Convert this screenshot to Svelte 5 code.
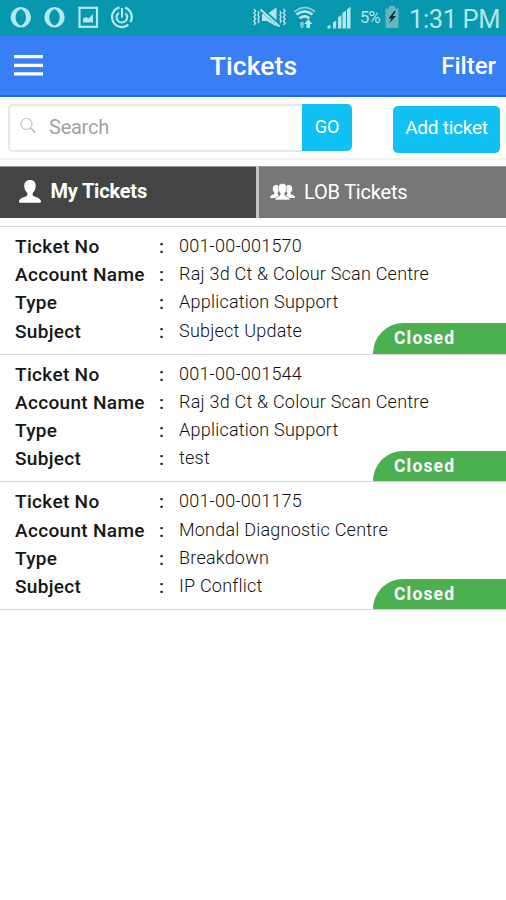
<script>
  const tickets = [
    { no: '001-00-001570', account: 'Raj 3d Ct & Colour Scan Centre', type: 'Application Support', subject: 'Subject Update' },
    { no: '001-00-001544', account: 'Raj 3d Ct & Colour Scan Centre', type: 'Application Support', subject: 'test' },
    { no: '001-00-001175', account: 'Mondal Diagnostic Centre', type: 'Breakdown', subject: 'IP Conflict' }
  ];
  const fields = [
    ['Ticket No', 'no'],
    ['Account Name', 'account'],
    ['Type', 'type'],
    ['Subject', 'subject']
  ];
</script>

<div class="screen">
  <div class="status">
    <svg width="136" height="36" viewBox="0 0 136 36" fill="none" stroke="#b5e8ee">
      {#each [20.8, 54.5] as x}
        <path transform="translate({x} 17.3)" fill="#b5e8ee" stroke="none" fill-rule="evenodd" d="M0-10.200A10.200 10.200 0 0 1 0 10.200A10.200 10.200 0 0 1 0-10.200zM0-8.400C-7-5-7 5 0 8.400C7 5 7-5 0-8.400z" />
      {/each}
      <rect x="79.5" y="7.8" width="17.5" height="19" stroke-width="2.2" />
      <path d="M83 22.500v-4l3-1.500 2.500 1.500 4.500-4.500v8.500z" fill="#b5e8ee" stroke="none" />
      <path d="M119.500 7.400A10 10 0 1 0 128.500 24.700M125 7.600A10 10 0 0 1 130.500 22" stroke-width="2.200" />
      <path d="M119 12.800A5.300 5.300 0 1 0 125.300 13.200" stroke-width="2.100" />
      <path d="M122 8v9.500" stroke-width="2" />
    </svg>
    <div class="right">
      <svg width="104" height="36" viewBox="250 0 104 36" fill="none" stroke="#b5e5e9">
        <path d="M254 9l1.500 2-1.500 2 1.500 2-1.500 2 1.500 2-1.500 2 1.500 2-1.500 2M258 11l1 2-1 2 1 2-1 2 1 2-1 2M280 11l1 2-1 2 1 2-1 2 1 2-1 2M283.500 9l1.500 2-1.500 2 1.500 2-1.500 2 1.500 2-1.500 2 1.500 2-1.500 2" stroke-width="1.4" />
        <path d="M262 14h5l9.500-6.500v19L267 21h-5z" fill="#b5e5e9" stroke="none" />
        <path d="M261.500 9.500L279 25" stroke="#0797ae" stroke-width="4" />
        <path d="M260.500 9.500L279.500 26.500" stroke-width="1.9" />
        <path d="M294.500 11.800q10.300-8.500 20.600 0" stroke-width="1.7" opacity=".75" />
        <path d="M296.500 14.600q8-6.500 16 0M299.500 18.300q5-4 10 0" stroke-width="2.6" />
        <path d="M300 23l2-1.500 2 1.500v2h-4zM299.500 25.500h5l-2.500 3z" fill="#b5e5e9" stroke="none" opacity=".7" />
        <path d="M306.500 28v-4h-2.200l4-5 4 5H310v4z" fill="#b5e5e9" stroke="none" />
        <path d="M327.500 28.500v-2.500l3-1v3.500zM333 28.500v-6l3.200-2v8zM338 28.500V17.500l3.400-2.500v13.500zM342.500 28.500V13l3.500-2.500v18zM347 28.500V9.500l3.500-3v22z" fill="#b5e5e9" stroke="none" />
      </svg>
      <span class="pct">5%</span>
      <svg width="14" height="36" viewBox="0 0 14 36">
        <path d="M4 6h6v2.500h3.500V28H.5V8.500H4z" fill="#67b5c0" />
        <path d="M9.500 11L3.500 18.500h3L4 23.500l7-7.500H7.700l3.300-5z" fill="#092d34" />
      </svg>
      <span class="time">1:31 PM</span>
    </div>
  </div>

  <header>
    <svg width="29" height="21" viewBox="0 0 29 21"><path d="M0 1.700h29M0 10.300h29M0 18.900h29" stroke="#fff" stroke-width="3.2" /></svg>
    <h1>Tickets</h1>
    <span class="filter">Filter</span>
  </header>

  <div class="tools">
    <div class="search">
      <svg width="18" height="18" viewBox="0 0 18 18" fill="none" stroke="#c4c4c4" stroke-width="1.2"><circle cx="6.5" cy="7" r="5.5" /><path d="M10.500 10.800l4.700 4.700" stroke-width="1.8" /></svg>
      <span>Search</span>
    </div>
    <div class="go"><span>GO</span></div>
    <div class="add"><span>Add ticket</span></div>
  </div>

  <nav>
    <div class="tab active">
      <svg width="22" height="23" viewBox="0 0 22 23"><path d="M11 0c4 0 6 2.600 5.700 6.500-.2 3-1.500 5-3 6.500v2.500c1 1.800 8.300 1.500 8.300 6.500q0 .8-1 .8H1q-1 0-1-.8c0-5 7.300-4.700 8.300-6.500V13c-1.500-1.500-2.800-3.500-3-6.500C5 2.600 7 0 11 0z" fill="#fff" /></svg>
      <span class="my">My Tickets</span>
    </div>
    <div class="tab lob">
      <svg width="25" height="18" viewBox="0 0 25 18" fill="#fff">
        <path d="M6 2c2.800 0 3.600 2 3.200 4.500-.2 1.500-.8 2.300-1.500 3v1.600L9 12.500 6 15H0c0-3.500 3.800-3 4.300-4.300V9.500C3 8 2.800 6.800 2.800 5.500 2.800 3.500 4 2 6 2z" />
        <path d="M19 2c-2.800 0-3.600 2-3.200 4.500.2 1.500.8 2.300 1.500 3v1.600L16 12.500l3 2.500h6c0-3.500-3.800-3-4.300-4.300V9.500c1.300-1.500 1.500-2.700 1.500-4C22.200 3.500 21 2 19 2z" />
        <path d="M12.500.5c3 0 4.600 2 4.300 5-.2 2-1 3.500-2 4.500V12c.8 1.500 5.200 1.500 5.200 5H5c0-3.500 4.400-3.500 5.200-5v-2c-1-1-1.800-2.500-2-4.500-.3-3 1.300-5 4.300-5z" stroke="#777" stroke-width=".6" />
      </svg>
      <span class="lt">LOB Tickets</span>
    </div>
  </nav>

  <main>
    {#each tickets as ticket}
      <article>
        {#each fields as [label, key]}
          <div class="row">
            <b>{label}</b><i>:</i><span class="value">{ticket[key]}</span>
          </div>
        {/each}
        <div class="badge">Closed</div>
      </article>
    {/each}
  </main>
</div>

<style>
  :global(body) { background: #fff; }
  .screen { width: 506px; height: 900px; overflow: hidden; background: #fff; font-family: Roboto, sans-serif; color: #222; }
  svg { display: block; flex: none; }
  span { white-space: nowrap; }
  .status { height: 36px; background: #0797ae; display: flex; justify-content: space-between; color: #b5e5e9; }
  .right { display: flex; width: 256px; line-height: 38px; }
  .pct { width: 25px; margin-left: 6px; font-size: 16.5px; line-height: 36px; letter-spacing: -.8px; }
  .time { margin-left: 10px; font-size: 25.5px; letter-spacing: -.4px; line-height: 39px; }
  header { box-sizing: border-box; height: 61px; padding: 0 10px 0 14px; background: #387ef5; border-bottom: 2px solid #1c6bea; display: grid; grid-template-columns: 86px 1fr 86px; align-items: center; color: #fff; }
  h1 { margin: 0 3px 0 0; font-size: 26.5px; line-height: 59px; font-weight: 500; text-align: center; letter-spacing: .05px; }
  .filter { font-size: 24px; font-weight: 500; text-align: right; }
  .tools { box-sizing: border-box; height: 63px; padding: 7px 6px 0 8px; border-bottom: 2px solid #f3f3f3; display: flex; color: #fff; font-size: 19px; }
  .search { box-sizing: border-box; width: 294px; height: 48px; border: 2px solid #e7e7e7; border-right: 0; border-radius: 5px 0 0 5px; display: flex; align-items: center; color: #a3a3a3; }
  .search svg { margin: -5px 11px 0 10px; }
  .search span { font-size: 20px; letter-spacing: -.25px; margin-top: -2px; }
  .go { width: 50px; height: 47px; line-height: 45px; background: #11c1f3; border-radius: 0 5px 5px 0; text-align: center; }
  .go span { font-size: 18px; }
  .add { width: 107px; height: 47px; line-height: 43px; margin: 2px 0 0 41px; background: #11c1f3; border-radius: 5px; text-align: center; }
  .add span { letter-spacing: -.25px; }
  nav { display: flex; gap: 3px; height: 52px; margin-top: 6px; background: #c4c4c4; color: #fff; }
  .tab { display: flex; align-items: center; box-sizing: border-box; border-top: 1px solid #999; }
  .active { width: 256px; background: #444; padding: 0 0 3px 19px; gap: 9.5px; }
  .my { font-size: 20px; font-weight: 700; letter-spacing: -.2px; }
  .lob { flex: 1; background: #777; padding: 0 0 1px 11px; gap: 9px; }
  .lt { font-size: 20px; letter-spacing: -.2px; }
  main { margin-top: 8px; border-top: 1px solid #d5d5d5; }
  article { box-sizing: border-box; position: relative; height: 127.7px; padding: 5px 0 0 15px; border-bottom: 1px solid #d5d5d5; }
  .row { display: flex; height: 28.2px; line-height: 29px; font-size: 19px; }
  b { width: 144px; font-weight: 500; color: #161616; letter-spacing: .33px; }
  i { width: 20px; font-style: normal; font-weight: 500; }
  .value { font-size: 18px; line-height: 27.5px; font-weight: 300; color: #111; letter-spacing: .22px; }
  .badge { position: absolute; right: 0; bottom: 0; box-sizing: border-box; width: 133px; height: 30.5px; padding-left: 21px; background: #4caf50; border-radius: 30.5px 0 0 0; color: #fff; font-size: 17.5px; line-height: 31px; font-weight: 700; letter-spacing: 1.15px; }
</style>
